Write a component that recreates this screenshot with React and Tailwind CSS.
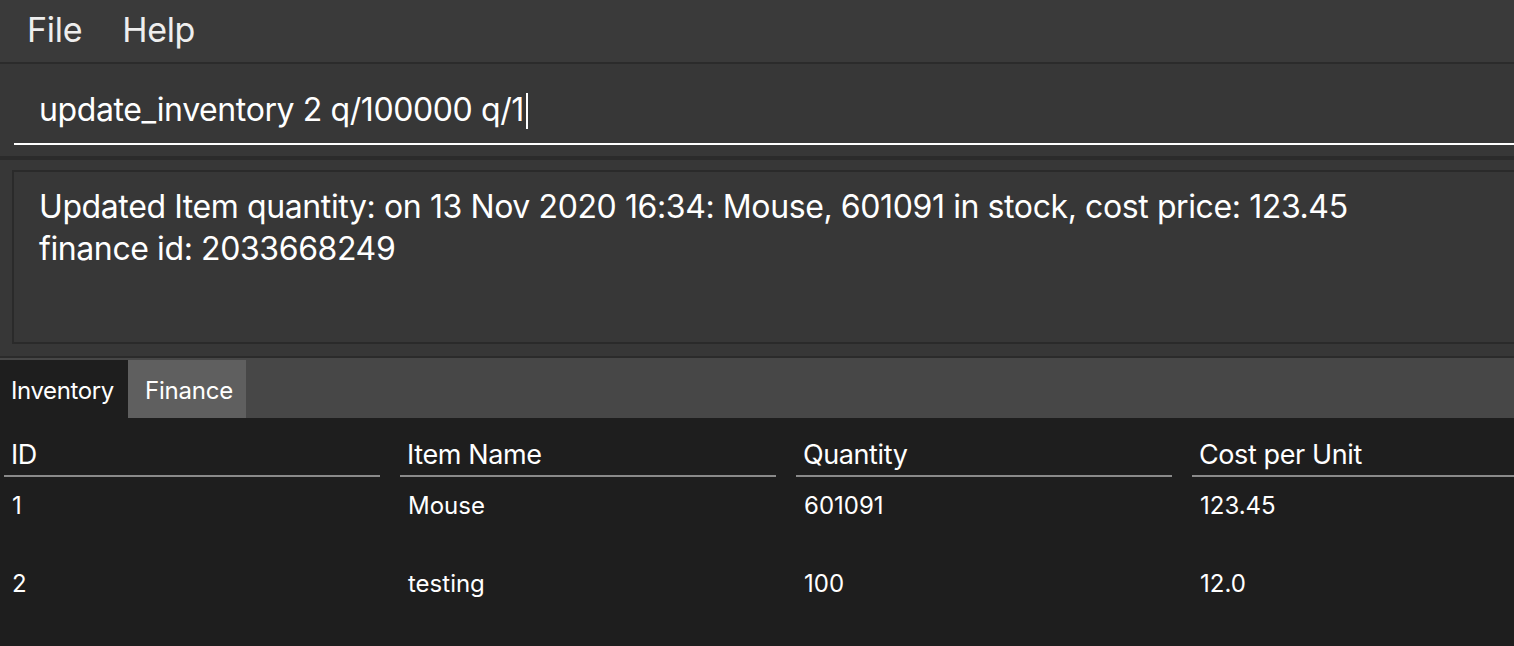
import React from "react";

const rows = [
  { id: "1", name: "Mouse", qty: "601091", cost: "123.45" },
  { id: "2", name: "testing", qty: "100", cost: "12.0" },
];

const headers = ["ID", "Item Name", "Quantity", "Cost per Unit"];

const App = () => {
  return (
    <div
      className="w-[1514px] h-[646px] overflow-hidden bg-[#1e1e1e] text-white flex flex-col"
      style={{ fontFamily: "Inter, 'Noto Sans', sans-serif" }}
    >
      {/* Menu bar */}
      <div className="h-[62px] shrink-0 bg-[#3a3a3a] flex items-center pl-[27px] pb-[4px] gap-[40px] text-[34px] tracking-[-0.3px] text-[#eeeeee]">
        <span>File</span>
        <span>Help</span>
      </div>
      <div className="h-[2px] shrink-0 bg-[#2b2b2b]" />

      {/* Command box */}
      <div className="h-[92px] shrink-0 bg-[#373737] pl-[14px] pt-[26px]">
        <div className="border-b-2 border-white h-[55px] pl-[25px] flex items-start">
          <span className="text-[32px] leading-[38px] mt-[1px] tracking-[-0.4px]">update_inventory 2 q/100000 q/1</span>
          <span className="w-[2px] h-[36px] bg-white ml-[2px] mt-[3px]" />
        </div>
      </div>
      <div className="h-[4px] shrink-0 bg-[#2b2b2b]" />

      {/* Result display */}
      <div className="h-[196px] shrink-0 bg-[#373737] pt-[10px] pl-[12px] pb-[12px]">
        <div className="h-full border-2 border-r-0 border-[#2a2a2a] pl-[25px] pt-[14px] text-[32px] leading-[42px] tracking-[-0.4px]">
          <div>Updated Item quantity: on 13 Nov 2020 16:34: Mouse, 601091 in stock, cost price: 123.45</div>
          <div>finance id: 2033668249</div>
        </div>
      </div>
      <div className="h-[2px] shrink-0 bg-[#2b2b2b]" />

      {/* Tabs */}
      <div className="h-[60px] shrink-0 bg-[#474747] flex items-end">
        <div className="h-[58px] w-[128px] bg-[#1e1e1e] flex items-center pt-[4px] pl-[11px] text-[24px] tracking-[-0.4px]">
          Inventory
        </div>
        <div className="h-[58px] w-[118px] bg-[#5f5f5f] flex items-center pt-[4px] pl-[17px] text-[24px] tracking-[-0.2px]">
          Finance
        </div>
      </div>

      {/* Table */}
      <div className="flex-1 bg-[#1e1e1e] pl-[4px]">
        <div className="grid grid-cols-[376px_376px_376px_1fr] gap-x-[20px]">
          {headers.map((h) => (
            <div
              key={h}
              className="h-[59px] border-b-2 border-[#8a8a8a] flex items-end pb-[0px] pl-[7px] text-[27px] tracking-[-0.4px]"
            >
              {h}
            </div>
          ))}
          {rows.map((r) =>
            [r.id, r.name, r.qty, r.cost].map((c, i) => (
              <div
                key={r.id + "-" + i}
                className="h-[78px] pt-[11px] pl-[8px] text-[24px]"
              >
                {c}
              </div>
            ))
          )}
        </div>
      </div>
    </div>
  );
};

export default App;
